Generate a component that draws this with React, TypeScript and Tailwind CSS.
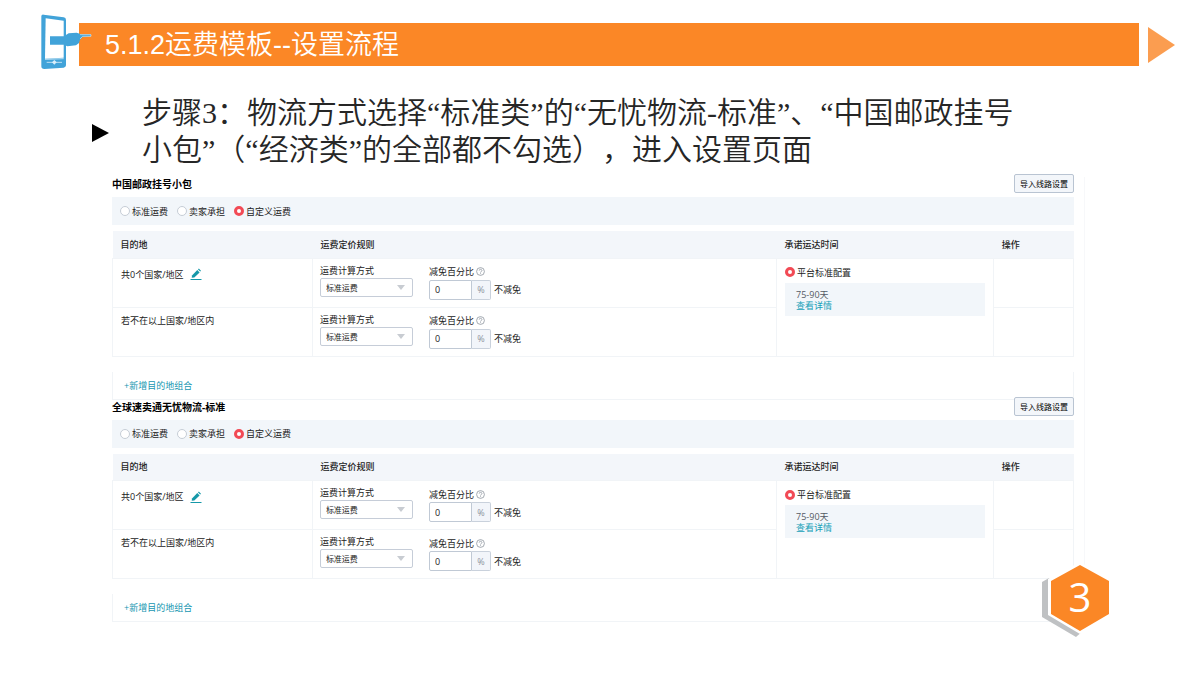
import { useId } from "react";

type CarrierProps = {
  title: string;
};

const cell = "border border-[#f1f4f7] align-top";
const modes = ["标准运费", "卖家承担", "自定义运费"];
const radio =
  "size-[10px] shrink-0 appearance-none rounded-full border border-[#c6cdd6] bg-white checked:border-[3px] checked:border-[#f24a55]";

function PhoneIcon() {
  return (
    <svg viewBox="30 25 156 171" className="relative z-10 -mr-[13px] h-[57px] w-[52px] shrink-0" aria-hidden="true">
      <path d="M34 35q0-6 7-5l60 8q7 1 7 8v136q0 6-7 7l-58 4q-9 0-9-8z" fill="#41a3d9" />
      <path d="M47 41l54 7v111l-56 3z" fill="#fff" />
      <path d="M60 95h42l14-9 24-2 14 5h29v6l-25 2-8 8-3 10-9 7-26 3-10-5H60z" fill="#41a3d9" />
      <path d="M150 90h33v5h-25l-8 8" fill="none" stroke="#d8e8f0" strokeWidth="2" />
      <path d="M45 164l56-2" stroke="#fff" strokeWidth="2" />
      <path d="M50 173h46" stroke="#bfe0f3" strokeWidth="3" />
      <path d="M73 166l7 7-7 7-7-7z" fill="#d9eefa" />
    </svg>
  );
}

function PencilIcon() {
  return (
    <svg viewBox="0 0 12 12" className="h-3 w-3" aria-hidden="true">
      <path d="M2 7.400 7.300 2.100 9.600 4.400 4.300 9.400 1.700 9.800z" fill="#1598a8" />
      <path d="M8 1.400l.8-.8 2.200 2.200-.8.8z" fill="#1598a8" />
      <path d="M.5 11.500h11" stroke="#1598a8" />
    </svg>
  );
}

function HelpIcon() {
  return (
    <svg viewBox="0 0 9 9" className="size-[9px]" fill="none" stroke="#8d949e" strokeWidth=".8" aria-hidden="true">
      <circle cx="4.500" cy="4.500" r="3.900" />
      <path d="M3.200 3.600c0-1.800 2.700-1.700 2.700 0 0 1-1.400 1-1.400 2M4.500 6.300v.8" />
    </svg>
  );
}

function PricingRule() {
  const id = useId();

  return (
    <div className="flex gap-4 pt-[5px] pl-[7px]">
      <div className="w-[93px]">
        <label htmlFor={`${id}-mode`} className="block leading-[14px]">运费计算方式</label>
        <div className="relative">
          <select
            id={`${id}-mode`}
            className="block h-[19px] w-full appearance-none rounded-xs border border-[#c6cdd8] bg-white pl-[5px] text-[8px]"
          >
            <option>标准运费</option>
          </select>
          <svg viewBox="0 0 8 5" className="pointer-events-none absolute top-[7px] right-2 h-[5px] w-2" aria-hidden="true">
            <path d="M0 0h8L4 5z" fill="#c8ccd2" />
          </svg>
        </div>
      </div>
      <div>
        <label htmlFor={`${id}-off`} className="flex h-4 items-center gap-[2px]">
          减免百分比
          <HelpIcon />
        </label>
        <div className="flex items-center">
          <input
            id={`${id}-off`}
            defaultValue="0"
            className="h-5 w-[43px] rounded-l-xs border border-[#c0c9d5] bg-white pl-[5px]"
          />
          <span className="flex h-5 w-[19px] items-center justify-center rounded-r-xs border border-l-0 border-[#c9d1dc] bg-[#f2f5fa] text-[#8b919b]">
            %
          </span>
          <span className="ml-[3px]">不减免</span>
        </div>
      </div>
    </div>
  );
}

function Carrier({ title }: CarrierProps) {
  const id = useId();

  return (
    <section>
      <div className="mb-1 flex h-4 items-end justify-between">
        <h2 className="text-[10px] leading-[18px] font-bold text-black">{title}</h2>
        <button
          type="button"
          className="h-[19px] w-[60px] shrink-0 rounded-xs border border-[#b9c4d2] bg-[#f3f6fa] text-[8px] whitespace-nowrap text-black"
        >
          导入线路设置
        </button>
      </div>

      <div className="flex h-7 items-center gap-[9px] bg-[#f2f6fa] pl-2">
        {modes.map((mode) => (
          <label key={mode} className="flex items-center gap-[2px]">
            <input type="radio" name={`${id}-fee`} defaultChecked={mode === "自定义运费"} className={radio} />
            {mode}
          </label>
        ))}
      </div>

      <table className="mt-[6px] w-full table-fixed border-collapse">
        <colgroup>
          <col className="w-[20.8%]" />
          <col className="w-[48.3%]" />
          <col className="w-[22.6%]" />
          <col className="w-[8.3%]" />
        </colgroup>
        <thead>
          <tr className="h-[27px] bg-[#f3f6fa] text-left">
            <th className="pl-2 font-medium">目的地</th>
            <th className="pl-2 font-medium">运费定价规则</th>
            <th className="pl-2 font-medium">承诺运达时间</th>
            <th className="pl-2 font-medium">操作</th>
          </tr>
        </thead>
        <tbody>
          <tr className="h-[49px]">
            <td className={cell}>
              <div className="flex items-center gap-[7px] pt-[9px] pl-2">
                共0个国家/地区
                <button type="button" aria-label="编辑">
                  <PencilIcon />
                </button>
              </div>
            </td>
            <td className={cell}>
              <PricingRule />
            </td>
            <td rowSpan={2} className={cell}>
              <div className="pt-[7px] pr-2 pl-2">
                <label className="flex items-center gap-[2px]">
                  <input type="radio" name={`${id}-time`} defaultChecked className={radio} />
                  平台标准配置
                </label>
                <div className="mt-1 h-[33px] bg-[#f2f6fa] pt-[6px] pl-[11px] leading-[11px] text-[#555b64]">
                  <p>75-90天</p>
                  <a href="#detail" className="block text-[#14a0b8]">查看详情</a>
                </div>
              </div>
            </td>
            <td className={cell} />
          </tr>
          <tr className="h-[49px]">
            <td className={cell}>
              <p className="pt-[6px] pl-2">若不在以上国家/地区内</p>
            </td>
            <td className={cell}>
              <PricingRule />
            </td>
            <td className={cell} />
          </tr>
        </tbody>
      </table>

      <div className="mt-[15px] flex h-7 items-center border-x border-b border-[#f1f4f7] pl-[11px]">
        <a href="#add" className="text-[#1596b0]">+新增目的地组合</a>
      </div>
    </section>
  );
}

export default function App() {
  return (
    <div className="relative min-h-screen bg-white pt-[13px] font-['Open_Sans','Noto_Sans_CJK_SC',sans-serif] text-[#222]">
      <header className="flex items-center pr-[25px] pl-10">
        <PhoneIcon />
        <h1 className="mt-[6px] flex h-[43px] flex-1 items-center bg-[#fb8726] pt-[2px] pl-[26px] font-['Liberation_Sans','Noto_Sans_CJK_SC',sans-serif] text-[27px] font-[350] text-white">
          5.1.2运费模板--设置流程
        </h1>
        <svg viewBox="0 0 27 36" className="mt-[6px] ml-[9px] h-9 w-[27px] shrink-0" aria-hidden="true">
          <path d="M0 0l27 18L0 36z" fill="#fb9d50" />
        </svg>
      </header>

      <div className="mt-6 flex items-center pl-[92px]">
        <svg viewBox="0 0 17 18" className="mt-1 h-[18px] w-[17px] shrink-0" aria-hidden="true">
          <path d="M0 0l17 9-17 9z" fill="#000" />
        </svg>
        <p className="ml-[33px] font-['Liberation_Serif','Noto_Sans_CJK_SC',serif] text-[30px] leading-[37px] font-[350] text-[#262626] [text-spacing-trim:space-all]">
          步骤3：物流方式选择“标准类”的“无忧物流-标准”、“中国邮政挂号
          <br />
          小包”（“经济类”的全部都不勾选），进入设置页面
        </p>
      </div>

      <main className="mt-[9px] mr-[115px] ml-28 border-r border-[#f7f8fa] pr-[10px] text-[9px] leading-[13px]">
        <Carrier title="中国邮政挂号小包" />
        <Carrier title="全球速卖通无忧物流-标准" />
      </main>

      <div className="absolute right-[90px] bottom-[42px] flex h-[74px] w-[68px] items-center justify-center">
        <svg viewBox="0 0 68 74" className="absolute inset-0" aria-hidden="true">
          <path d="M0 18l7-4 35 52-8 7L0 53z" fill="#bfc1c3" />
          <path d="M38-2L68 15v37L38 70 6 51V15z" fill="#fff" />
          <path d="M38 1l29 16v33L38 67 9 50V17z" fill="#fb8726" />
        </svg>
        <span className="relative -mt-2 ml-2 text-[40px] leading-none text-white">3</span>
      </div>
    </div>
  );
}
